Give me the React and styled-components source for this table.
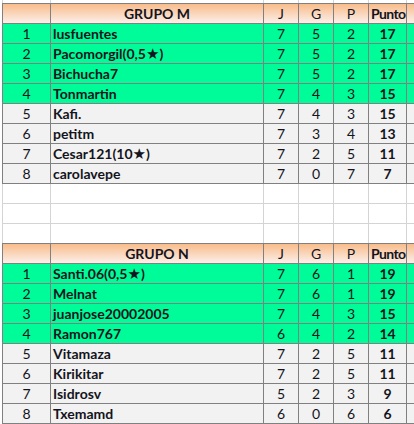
import React from "react";
import styled, { createGlobalStyle, css } from "styled-components";

const Global = createGlobalStyle`
  html, body { margin: 0; padding: 0; background: #ffffff; }
  body { font-family: Lato, "Noto Sans", "DejaVu Sans", sans-serif; }
`;

const DARK = "#808080";
const LIGHT = "#d4d4d4";

const Sheet = styled.div`
  width: 414px;
  height: 424px;
  overflow: hidden;
  padding-left: 2px;
  box-sizing: border-box;
  display: flex;
  flex-direction: column;
`;

const variantBg = {
  header: css`background: linear-gradient(to bottom, #f9bc8a 0%, #fad8c0 55%, #fbefe8 100%);`,
  green: css`background: #00fc98;`,
  gray: css`background: #f2f2f2;`,
  empty: css`background: #ffffff;`,
};

const Row = styled.div`
  display: grid;
  grid-template-columns: 48px 213px 35px 35px 35px 38px;
  height: ${(p) => p.$height}px;
  box-sizing: content-box;
  border-left: 1px solid ${(p) => (p.$light ? LIGHT : DARK)};
  border-top: ${(p) => (p.$top ? `1px solid ${DARK}` : "none")};
  border-bottom: ${(p) => (p.$noBottom ? "none" : `1px solid ${p.$light ? LIGHT : DARK}`)};
  ${(p) => variantBg[p.$variant]}
`;

const Cell = styled.div`
  border-right: 1px solid ${(p) => (p.$light ? LIGHT : DARK)};
  font-size: 14px;
  line-height: 19px;
  color: #141420;
  white-space: nowrap;
  overflow: hidden;
  text-align: ${(p) => p.$align || "center"};
  font-weight: ${(p) => (p.$bold ? 700 : 400)};
  padding-left: ${(p) => (p.$align === "left" ? "2px" : "0")};
  letter-spacing: ${(p) => (p.$tight ? "-0.6px" : "normal")};
`;

const Star = styled.span`
  font-family: "DejaVu Sans", sans-serif;
  font-size: 15px;
`;

const COLS = 6;

function renderName(name) {
  const parts = name.split("★");
  if (parts.length === 1) return name;
  return (
    <>
      {parts[0]}
      <Star>★</Star>
      {parts[1]}
    </>
  );
}

function BlankRow({ height, noBottom }) {
  return (
    <Row $variant="empty" $light $height={height} $noBottom={noBottom}>
      {Array.from({ length: COLS }).map((_, i) => (
        <Cell key={i} $light />
      ))}
    </Row>
  );
}

function Group({ title, players }) {
  return (
    <>
      <Row $variant="header" $top $height={19}>
        <Cell />
        <Cell $bold>{title}</Cell>
        <Cell>J</Cell>
        <Cell>G</Cell>
        <Cell>P</Cell>
        <Cell $bold $tight $align="left">Punto</Cell>
      </Row>
      {players.map((p, i) => (
        <Row key={p.name} $variant={i < 4 ? "green" : "gray"} $height={19}>
          <Cell>{i + 1}</Cell>
          <Cell $bold $align="left">{renderName(p.name)}</Cell>
          <Cell>{p.j}</Cell>
          <Cell>{p.g}</Cell>
          <Cell>{p.p}</Cell>
          <Cell $bold>{p.pts}</Cell>
        </Row>
      ))}
    </>
  );
}

const groupM = [
  { name: "lusfuentes", j: 7, g: 5, p: 2, pts: 17 },
  { name: "Pacomorgil(0,5★)", j: 7, g: 5, p: 2, pts: 17 },
  { name: "Bichucha7", j: 7, g: 5, p: 2, pts: 17 },
  { name: "Tonmartin", j: 7, g: 4, p: 3, pts: 15 },
  { name: "Kafi.", j: 7, g: 4, p: 3, pts: 15 },
  { name: "petitm", j: 7, g: 3, p: 4, pts: 13 },
  { name: "Cesar121(10★)", j: 7, g: 2, p: 5, pts: 11 },
  { name: "carolavepe", j: 7, g: 0, p: 7, pts: 7 },
];

const groupN = [
  { name: "Santi.06(0,5★)", j: 7, g: 6, p: 1, pts: 19 },
  { name: "Melnat", j: 7, g: 6, p: 1, pts: 19 },
  { name: "juanjose20002005", j: 7, g: 4, p: 3, pts: 15 },
  { name: "Ramon767", j: 6, g: 4, p: 2, pts: 14 },
  { name: "Vitamaza", j: 7, g: 2, p: 5, pts: 11 },
  { name: "Kirikitar", j: 7, g: 2, p: 5, pts: 11 },
  { name: "Isidrosv", j: 5, g: 2, p: 3, pts: 9 },
  { name: "Txemamd", j: 6, g: 0, p: 6, pts: 6 },
];

export default function App() {
  return (
    <>
      <Global />
      <Sheet>
        <BlankRow height={3} noBottom />
        <Group title="GRUPO M" players={groupM} />
        <BlankRow height={19} />
        <BlankRow height={19} />
        <BlankRow height={19} noBottom />
        <Group title="GRUPO N" players={groupN} />
      </Sheet>
    </>
  );
}
